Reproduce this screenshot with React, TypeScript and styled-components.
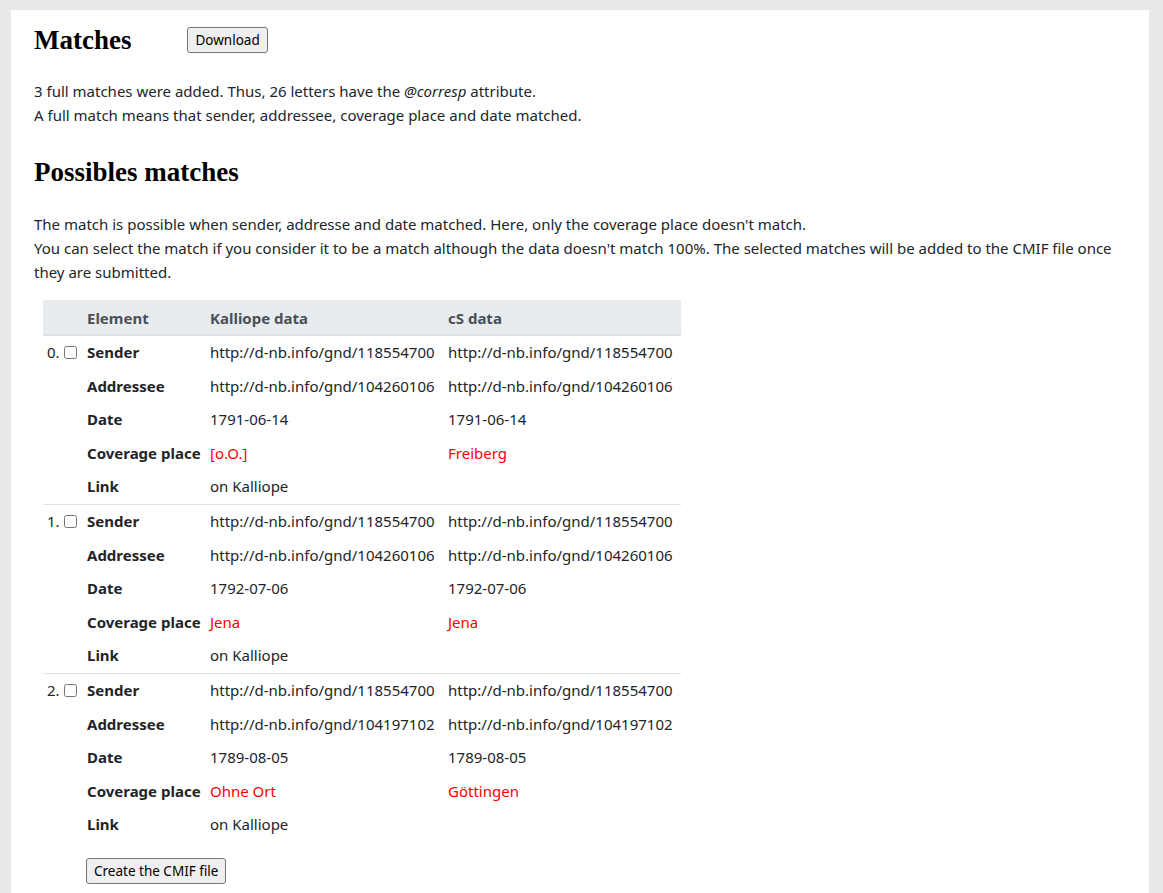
import React from 'react'
import styled, { createGlobalStyle } from 'styled-components'

const GlobalStyle = createGlobalStyle`
  html, body {
    margin: 0;
    padding: 0;
    background-color: #e9e9e9;
  }
  body {
    font-family: 'Noto Sans', 'Open Sans', sans-serif;
    font-size: 15px;
    line-height: 24px;
    color: #212529;
  }
`

const Page = styled.div`
  padding: 10px 14px 0 11px;
  min-height: 893px;
  box-sizing: border-box;
`

const Panel = styled.main`
  background-color: #fff;
  padding: 14px 23px 40px 23px;
  min-height: 883px;
  box-sizing: border-box;
`

const TitleRow = styled.div`
  display: flex;
  align-items: center;
  gap: 56px;
  margin-bottom: 23px;
`

const Heading = styled.h2`
  font-family: 'Liberation Serif', 'Times New Roman', serif;
  font-weight: bold;
  font-size: 27px;
  line-height: 32px;
  margin: 0;
  color: #000;
`

const SectionHeading = styled(Heading)`
  margin: 29px 0 24px 0;
`

const Button = styled.button`
  font-family: 'Noto Sans', 'Open Sans', sans-serif;
  font-size: 13.5px;
  line-height: 18px;
  color: #000;
  background-color: #efefef;
  border: 1px solid #767676;
  border-radius: 3px;
  padding: 3px 7px;
  cursor: pointer;
`

const Text = styled.p`
  margin: 0;
`

const Table = styled.table`
  margin: 16px 0 0 9px;
  width: 638px;
  table-layout: fixed;
  border-collapse: collapse;
`

const HeadCell = styled.th<{ $width: number }>`
  width: ${({ $width }) => $width}px;
  text-align: left;
  font-weight: bold;
  color: #495057;
  background-color: #e9ecef;
  border-bottom: 2px solid #dee2e6;
  padding: 6px 4px 4px 4px;
  line-height: 24px;
`

const Cell = styled.td<{ $first?: boolean; $red?: boolean; $bold?: boolean }>`
  padding: 5px 4px;
  line-height: 23.6px;
  vertical-align: top;
  white-space: nowrap;
  font-weight: ${({ $bold }) => ($bold ? 'bold' : 'normal')};
  color: ${({ $red }) => ($red ? '#ff0000' : '#212529')};
  border-top: ${({ $first }) => ($first ? '1px solid #dee2e6' : 'none')};
`

const IndexTd = styled.td<{ $first?: boolean }>`
  padding: 5px 0 5px 4px;
  vertical-align: top;
  border-top: ${({ $first }) => ($first ? '1px solid #dee2e6' : 'none')};
`

const IndexWrap = styled.div`
  display: flex;
  align-items: center;
  gap: 4px;
  line-height: 23.6px;
  color: #212529;
`

const Check = styled.input`
  width: 13px;
  height: 13px;
  margin: 0;
`

const LinkText = styled.a`
  color: #212529;
  text-decoration: none;
`

const SubmitRow = styled.div`
  padding: 16px 0 0 52px;
`

type Match = {
  sender: string
  addressee: string
  date: string
  kalliopePlace: string
  csPlace: string
}

const matches: Match[] = [
  {
    sender: 'http://d-nb.info/gnd/118554700',
    addressee: 'http://d-nb.info/gnd/104260106',
    date: '1791-06-14',
    kalliopePlace: '[o.O.]',
    csPlace: 'Freiberg',
  },
  {
    sender: 'http://d-nb.info/gnd/118554700',
    addressee: 'http://d-nb.info/gnd/104260106',
    date: '1792-07-06',
    kalliopePlace: 'Jena',
    csPlace: 'Jena',
  },
  {
    sender: 'http://d-nb.info/gnd/118554700',
    addressee: 'http://d-nb.info/gnd/104197102',
    date: '1789-08-05',
    kalliopePlace: 'Ohne Ort',
    csPlace: 'Göttingen',
  },
]

const MatchRows = ({ match, index }: { match: Match; index: number }) => (
  <>
    <tr>
      <IndexTd $first>
        <IndexWrap>
          {index}.
          <Check type="checkbox" />
        </IndexWrap>
      </IndexTd>
      <Cell $first $bold>Sender</Cell>
      <Cell $first>{match.sender}</Cell>
      <Cell $first>{match.sender}</Cell>
    </tr>
    <tr>
      <Cell />
      <Cell $bold>Addressee</Cell>
      <Cell>{match.addressee}</Cell>
      <Cell>{match.addressee}</Cell>
    </tr>
    <tr>
      <Cell />
      <Cell $bold>Date</Cell>
      <Cell>{match.date}</Cell>
      <Cell>{match.date}</Cell>
    </tr>
    <tr>
      <Cell />
      <Cell $bold>Coverage place</Cell>
      <Cell $red>{match.kalliopePlace}</Cell>
      <Cell $red>{match.csPlace}</Cell>
    </tr>
    <tr>
      <Cell />
      <Cell $bold>Link</Cell>
      <Cell>
        <LinkText href="#">on Kalliope</LinkText>
      </Cell>
      <Cell />
    </tr>
  </>
)

const App = () => {
  return (
    <>
      <GlobalStyle />
      <Page>
        <Panel>
          <TitleRow>
            <Heading>Matches</Heading>
            <Button>Download</Button>
          </TitleRow>
          <Text>
            3 full matches were added. Thus, 26 letters have the <em>@corresp</em> attribute.
          </Text>
          <Text>A full match means that sender, addressee, coverage place and date matched.</Text>

          <SectionHeading>Possibles matches</SectionHeading>
          <Text>
            The match is possible when sender, addresse and date matched. Here, only the coverage place doesn't match.
          </Text>
          <Text>
            You can select the match if you consider it to be a match although the data doesn't match 100%. The
            selected matches will be added to the CMIF file once they are submitted.
          </Text>

          <Table>
            <thead>
              <tr>
                <HeadCell $width={32}></HeadCell>
                <HeadCell $width={115}>Element</HeadCell>
                <HeadCell $width={230}>Kalliope data</HeadCell>
                <HeadCell $width={229}>cS data</HeadCell>
              </tr>
            </thead>
            <tbody>
              {matches.map((m, i) => (
                <MatchRows key={i} match={m} index={i} />
              ))}
            </tbody>
          </Table>

          <SubmitRow>
            <Button>Create the CMIF file</Button>
          </SubmitRow>
        </Panel>
      </Page>
    </>
  )
}

export default App
